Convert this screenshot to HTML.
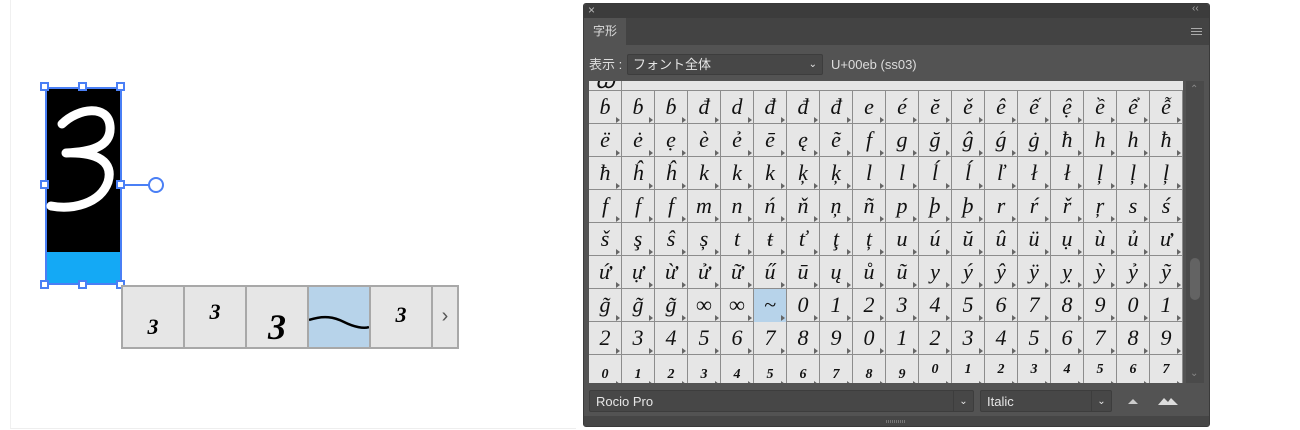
<!DOCTYPE html>
<html><head><meta charset="utf-8"><style>
*{margin:0;padding:0;box-sizing:border-box}
body{width:1300px;height:430px;background:#fff;position:relative;overflow:hidden;font-family:"Liberation Sans","Noto Sans CJK JP",sans-serif}
.abs{position:absolute}
.canvas{left:10px;top:0;width:566px;height:429px;border-left:1px solid #f0f0f0;border-bottom:1px solid #eee}
.h{position:absolute;width:9px;height:9px;border:2px solid #4a7ff5;background:#fff}
.panel{left:583px;top:3px;width:627px;height:424px;background:#535353;border-radius:3px;border:1px solid #3a3a3a}
.grid{position:absolute;left:589px;top:81px;width:594px;height:302px;overflow:hidden;background:#e6e6e6}
.row{display:flex;height:33px;border-bottom:1px solid #8c8c8c}
.c{width:33px;height:33px;border-right:1px solid #8c8c8c;font-family:"Liberation Serif",serif;font-style:italic;font-size:22px;line-height:32px;text-align:center;color:#111;position:relative}
.c:after{content:"";position:absolute;right:1px;bottom:1px;border-left:4px solid #666;border-top:3px solid transparent;border-bottom:3px solid transparent}
.sm .c{font-size:14px;line-height:40px;font-weight:bold}
.strip{left:121px;top:285px;width:338px;height:64px;border:2px solid #a8a8a8;background:#e6e6e6;display:flex}
.s{height:60px;border-right:2px solid #a8a8a8;font-family:"Liberation Serif",serif;font-style:italic;font-weight:bold;text-align:center}
</style></head><body>
<div class="abs canvas"></div>
<div class="abs" style="left:45px;top:87px;width:76px;height:166px;background:#000"></div>
<div class="abs" style="left:45px;top:252px;width:76px;height:33px;background:#14a9f5"></div>
<div class="abs" style="left:45px;top:87px;width:77px;height:198px;border:2px solid #4a7ff5"></div>
<svg class="abs" style="left:0;top:0" width="130" height="260"><path d="M62 124 C78 108 108 104 110 126 C112 148 88 152 66 153 C98 152 114 162 108 182 C100 204 72 210 51 206" stroke="#fff" stroke-width="9" fill="none" stroke-linecap="round" stroke-linejoin="round"/></svg>
<div class="h" style="left:40px;top:82px"></div><div class="h" style="left:78px;top:82px"></div><div class="h" style="left:116px;top:82px"></div>
<div class="h" style="left:40px;top:180px"></div><div class="h" style="left:116px;top:180px"></div>
<div class="h" style="left:40px;top:280px"></div><div class="h" style="left:78px;top:280px"></div><div class="h" style="left:116px;top:280px"></div>
<div class="abs" style="left:125px;top:184px;width:24px;height:2px;background:#4a7ff5"></div>
<div class="abs" style="left:148px;top:177px;width:16px;height:16px;border:2px solid #4a7ff5;border-radius:50%;background:#fff"></div>
<div class="abs strip">
<div class="s" style="width:62px;font-size:22px;line-height:80px">3</div>
<div class="s" style="width:62px;font-size:22px;line-height:50px">3</div>
<div class="s" style="width:62px;font-size:36px;line-height:80px">3</div>
<div class="s" style="width:62px;background:#b7d3ea;position:relative"><svg width="60" height="60" style="position:absolute;left:0;top:0"><path d="M0 33 C15 28 25 30 35 35 S55 42 60 40" stroke="#000" stroke-width="2.5" fill="none"/></svg></div>
<div class="s" style="width:62px;font-size:22px;line-height:55px">3</div>
<div class="s" style="width:24px;border:none;font-style:normal;font-weight:normal;font-family:'Liberation Sans';color:#555;font-size:20px;line-height:58px">›</div>
</div>

<div class="abs panel"></div>
<div class="abs" style="left:584px;top:4px;width:625px;height:14px;background:#3c3c3c;border-radius:3px 3px 0 0"></div>
<div class="abs" style="left:588px;top:3px;color:#bbb;font-size:12px">×</div>
<div class="abs" style="left:1192px;top:3px;color:#aaa;font-size:10px">‹‹</div>
<div class="abs" style="left:584px;top:18px;width:625px;height:27px;background:#434343"></div>
<div class="abs" style="left:584px;top:18px;width:42px;height:27px;background:#535353;color:#ddd;font-size:12px;line-height:27px;padding-left:9px">字形</div>
<div class="abs" style="left:1191px;top:28px;width:11px;height:1px;background:#aaa;box-shadow:0 3px #aaa,0 6px #aaa"></div>
<div class="abs" style="left:589px;top:56px;color:#ddd;font-size:13px;line-height:18px">表示 :</div>
<div class="abs" style="left:627px;top:54px;width:196px;height:21px;background:#474747;border:1px solid #3d3d3d;border-radius:2px;color:#e6e6e6;font-size:13px;line-height:20px;padding-left:5px">フォント全体<span style="position:absolute;right:5px;top:0;font-size:10px">⌄</span></div>
<div class="abs" style="left:831px;top:57px;color:#ddd;font-size:13px">U+00eb (ss03)</div>

<div class="grid">
<div class="row" style="height:10px;overflow:hidden"><div class="c" style="line-height:0">ꞷ</div></div>
<div class="row"><div class="c">ɓ</div><div class="c">ɓ</div><div class="c">ɓ</div><div class="c">đ</div><div class="c">d</div><div class="c">đ</div><div class="c">đ</div><div class="c">đ</div><div class="c">e</div><div class="c">é</div><div class="c">ĕ</div><div class="c">ě</div><div class="c">ê</div><div class="c">ế</div><div class="c">ệ</div><div class="c">ề</div><div class="c">ể</div><div class="c">ễ</div></div>
<div class="row"><div class="c">ë</div><div class="c">ė</div><div class="c">ẹ</div><div class="c">è</div><div class="c">ẻ</div><div class="c">ē</div><div class="c">ę</div><div class="c">ẽ</div><div class="c">f</div><div class="c">g</div><div class="c">ğ</div><div class="c">ĝ</div><div class="c">ǵ</div><div class="c">ġ</div><div class="c">ħ</div><div class="c">h</div><div class="c">h</div><div class="c">ħ</div></div>
<div class="row"><div class="c">ħ</div><div class="c">ĥ</div><div class="c">ĥ</div><div class="c">k</div><div class="c">k</div><div class="c">k</div><div class="c">ķ</div><div class="c">ķ</div><div class="c">l</div><div class="c">l</div><div class="c">ĺ</div><div class="c">ĺ</div><div class="c">ľ</div><div class="c">ł</div><div class="c">ł</div><div class="c">ļ</div><div class="c">ļ</div><div class="c">ļ</div></div>
<div class="row"><div class="c">f</div><div class="c">f</div><div class="c">f</div><div class="c">m</div><div class="c">n</div><div class="c">ń</div><div class="c">ň</div><div class="c">ņ</div><div class="c">ñ</div><div class="c">p</div><div class="c">þ</div><div class="c">þ</div><div class="c">r</div><div class="c">ŕ</div><div class="c">ř</div><div class="c">ŗ</div><div class="c">s</div><div class="c">ś</div></div>
<div class="row"><div class="c">š</div><div class="c">ş</div><div class="c">ŝ</div><div class="c">ș</div><div class="c">t</div><div class="c">ŧ</div><div class="c">ť</div><div class="c">ţ</div><div class="c">ț</div><div class="c">u</div><div class="c">ú</div><div class="c">ŭ</div><div class="c">û</div><div class="c">ü</div><div class="c">ụ</div><div class="c">ù</div><div class="c">ủ</div><div class="c">ư</div></div>
<div class="row"><div class="c">ứ</div><div class="c">ự</div><div class="c">ừ</div><div class="c">ử</div><div class="c">ữ</div><div class="c">ű</div><div class="c">ū</div><div class="c">ų</div><div class="c">ů</div><div class="c">ũ</div><div class="c">y</div><div class="c">ý</div><div class="c">ŷ</div><div class="c">ÿ</div><div class="c">ỵ</div><div class="c">ỳ</div><div class="c">ỷ</div><div class="c">ỹ</div></div>
<div class="row"><div class="c">g̃</div><div class="c">g̃</div><div class="c">g̃</div><div class="c">∞</div><div class="c">∞</div><div class="c" style="background:#b7d3ea">~</div><div class="c">0</div><div class="c">1</div><div class="c">2</div><div class="c">3</div><div class="c">4</div><div class="c">5</div><div class="c">6</div><div class="c">7</div><div class="c">8</div><div class="c">9</div><div class="c">0</div><div class="c">1</div></div>
<div class="row"><div class="c">2</div><div class="c">3</div><div class="c">4</div><div class="c">5</div><div class="c">6</div><div class="c">7</div><div class="c">8</div><div class="c">9</div><div class="c">0</div><div class="c">1</div><div class="c">2</div><div class="c">3</div><div class="c">4</div><div class="c">5</div><div class="c">6</div><div class="c">7</div><div class="c">8</div><div class="c">9</div></div>
<div class="row sm"><div class="c">0</div><div class="c">1</div><div class="c">2</div><div class="c">3</div><div class="c">4</div><div class="c">5</div><div class="c">6</div><div class="c">7</div><div class="c">8</div><div class="c">9</div><div class="c" style="line-height:30px">0</div><div class="c" style="line-height:30px">1</div><div class="c" style="line-height:30px">2</div><div class="c" style="line-height:30px">3</div><div class="c" style="line-height:30px">4</div><div class="c" style="line-height:30px">5</div><div class="c" style="line-height:30px">6</div><div class="c" style="line-height:30px">7</div></div>
</div>
<div class="abs" style="left:1186px;top:81px;width:18px;height:302px;background:#4a4a4a"></div>
<div class="abs" style="left:1190px;top:84px;color:#888;font-size:10px">⌃</div>
<div class="abs" style="left:1190px;top:368px;color:#888;font-size:10px">⌄</div>
<div class="abs" style="left:1190px;top:258px;width:10px;height:42px;background:#636363;border-radius:5px"></div>

<div class="abs" style="left:589px;top:390px;width:385px;height:22px;background:#474747;border:1px solid #3d3d3d;border-radius:2px;color:#e6e6e6;font-size:13px;line-height:21px;padding-left:6px">Rocio Pro<span style="position:absolute;right:0;top:0;width:20px;height:20px;border-left:1px solid #3d3d3d;text-align:center;font-size:10px">⌄</span></div>
<div class="abs" style="left:980px;top:390px;width:132px;height:22px;background:#474747;border:1px solid #3d3d3d;border-radius:2px;color:#e6e6e6;font-size:13px;line-height:21px;padding-left:6px">Italic<span style="position:absolute;right:0;top:0;width:20px;height:20px;border-left:1px solid #3d3d3d;text-align:center;font-size:10px">⌄</span></div>
<svg class="abs" style="left:1125px;top:394px" width="60" height="14"><path d="M3 10 L8 5 L13 10Z" fill="#ccc"/><path d="M33 11 L39 4 L43 8 L46 4 L53 11Z" fill="#ddd"/></svg>
<div class="abs" style="left:584px;top:416px;width:625px;height:10px;background:#464646"></div>
<div class="abs" style="left:886px;top:420px;width:20px;height:3px;background:repeating-linear-gradient(90deg,#777 0 1px,transparent 1px 2px)"></div>
</body></html>
